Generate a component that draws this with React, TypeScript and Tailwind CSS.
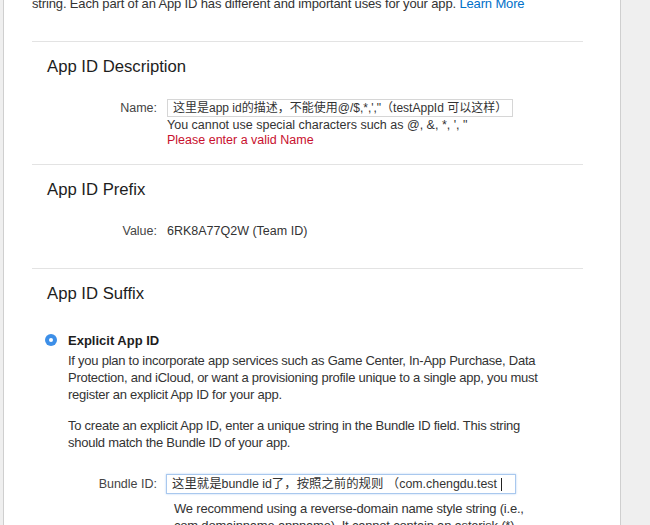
import React from 'react';

const font = "font-['Liberation_Sans','Noto_Sans_CJK_SC',sans-serif]";

const Divider = () => <div className="h-px w-[551px] bg-[#e3e3e3]" />;

const SectionTitle = ({ children }: { children: React.ReactNode }) => (
  <h2 className="pl-[15px] text-[16.7px] leading-[20px] text-[#1d1d1d]">{children}</h2>
);

export default function App() {
  return (
    <div className={`flex h-[525px] w-[650px] overflow-hidden bg-[#f0f0f0] ${font}`}>
      <div className="w-[3px] shrink-0 bg-[#efefef]" />
      <div className="w-[618px] shrink-0 border-x border-[#cfcfcf] bg-white pl-[28px]">
        <p className="-mt-[5px] text-[13px] leading-[18px] tracking-[-0.15px] text-[#333]">
          string. Each part of an App ID has different and important uses for your app.{' '}
          <span className="text-[#0070c9]">Learn More</span>
        </p>

        <div className="mt-[28px]">
          <Divider />
        </div>

        {/* App ID Description */}
        <div className="pt-[15px]">
          <SectionTitle>App ID Description</SectionTitle>
          <div className="mt-[22px] flex items-start">
            <div className="w-[125px] pt-[2px] text-right text-[12.5px] leading-[15px] text-[#444]">Name:</div>
            <div className="ml-[10px] flex flex-col">
              <div className="flex h-[18px] w-[346px] items-center border border-[#d6d6d6] pl-[5px] text-[12px] text-[#333]">
                这里是app id的描述，不能使用@/$,*,',"（testAppId 可以这样）
              </div>
              <div className="mt-[1px] text-[12.5px] leading-[15px] text-[#333]">
                You cannot use special characters such as @, &amp;, *, ', "
              </div>
              <div className="text-[12.5px] leading-[15px] text-[#c8102e]">Please enter a valid Name</div>
            </div>
          </div>
        </div>

        <div className="mt-[16px]">
          <Divider />
        </div>

        {/* App ID Prefix */}
        <div className="pt-[15px]">
          <SectionTitle>App ID Prefix</SectionTitle>
          <div className="mt-[24px] flex items-center text-[12.5px] leading-[15px]">
            <div className="w-[125px] text-right text-[#444]">Value:</div>
            <div className="ml-[10px] text-[#333]">6RK8A77Q2W (Team ID)</div>
          </div>
        </div>

        <div className="mt-[29px]">
          <Divider />
        </div>

        {/* App ID Suffix */}
        <div className="pt-[15px]">
          <SectionTitle>App ID Suffix</SectionTitle>
          <div className="mt-[28px] flex items-start">
            <div className="ml-[13px] mt-[2px] flex h-[12px] w-[12px] items-center justify-center rounded-full bg-[#3d8fe8]">
              <div className="h-[4px] w-[4px] rounded-full bg-white" />
            </div>
            <div className="ml-[11px] w-[500px]">
              <div className="text-[13px] font-bold leading-[17px] text-[#1d1d1d]">Explicit App ID</div>
              <p className="mt-[3px] text-[13px] leading-[17px] tracking-[-0.25px] text-[#333]">
                If you plan to incorporate app services such as Game Center, In-App Purchase, Data
                <br />
                Protection, and iCloud, or want a provisioning profile unique to a single app, you must
                <br />
                register an explicit App ID for your app.
              </p>
              <p className="mt-[14px] text-[13px] leading-[17px] tracking-[-0.25px] text-[#333]">
                To create an explicit App ID, enter a unique string in the Bundle ID field. This string
                <br />
                should match the Bundle ID of your app.
              </p>
            </div>
          </div>
          <div className="mt-[23px] flex items-start">
            <div className="w-[125px] pt-[3px] text-right text-[12.5px] leading-[15px] text-[#444]">Bundle ID:</div>
            <div className="ml-[9px] flex flex-col">
              <div className="flex h-[20px] w-[350px] items-center border border-[#a9c8ee] pl-[5px] text-[12.4px] text-[#333] shadow-[0_0_2px_#b8d4f5]">
                这里就是bundle id了，按照之前的规则 （com.chengdu.test
                <span className="ml-[4px] inline-block h-[13px] w-px bg-[#222]" />
              </div>
              <p className="ml-[8px] mt-[6px] w-[370px] text-[13px] leading-[17px] tracking-[-0.2px] text-[#333]">
                We recommend using a reverse-domain name style string (i.e.,
                <br />
                com.domainname.appname). It cannot contain an asterisk (*).
              </p>
            </div>
          </div>
        </div>
      </div>
      <div className="flex-1 bg-[#efefef]" />
    </div>
  );
}
